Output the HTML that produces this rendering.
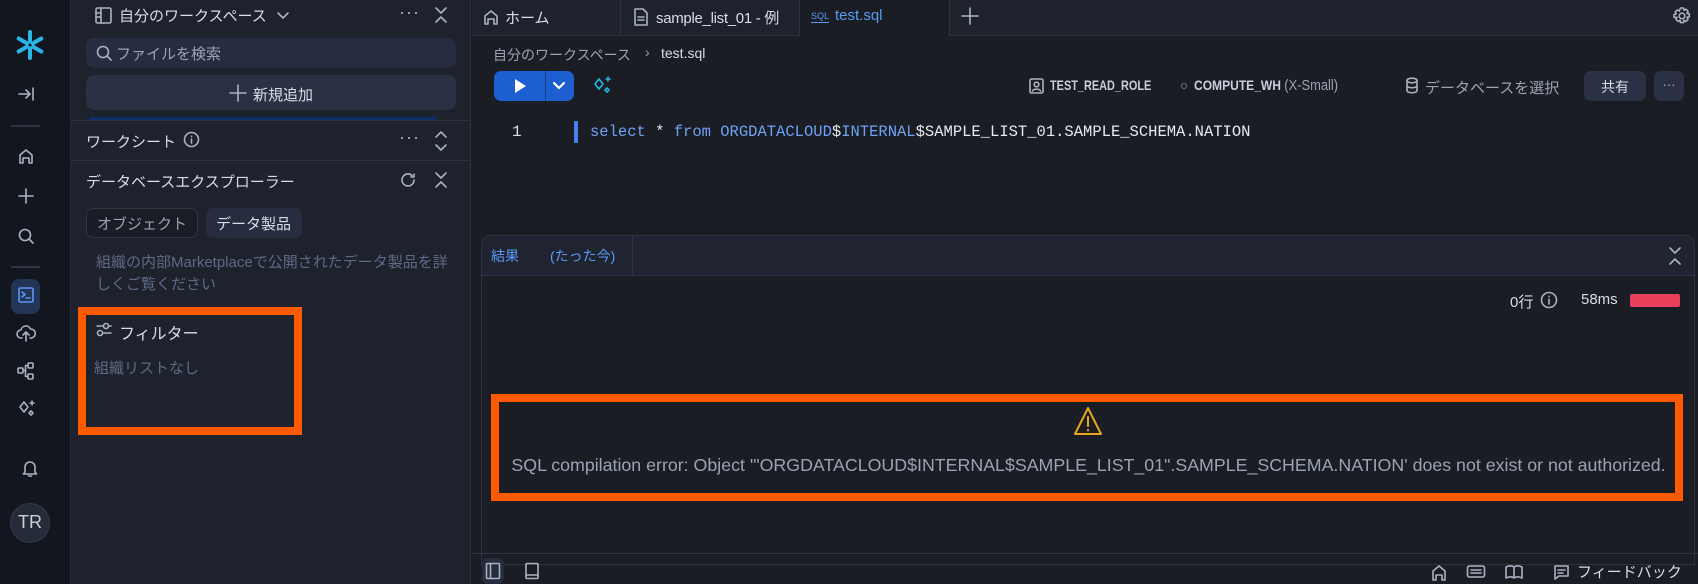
<!DOCTYPE html>
<html><head><meta charset="utf-8"><style>
*{box-sizing:border-box;margin:0;padding:0}
body{width:1698px;height:584px;overflow:hidden;background:#1a1d24;font-family:"Liberation Sans","Noto Sans CJK JP",sans-serif;color:#c9cfdb;position:relative}
.a{position:absolute}
svg{position:absolute;fill:none;stroke:#aab2c2;stroke-width:1.6;stroke-linecap:round;stroke-linejoin:round}
.t{position:absolute;white-space:nowrap}
</style></head><body>
<!-- left rail -->
<div class="a" style="left:0;top:0;width:71px;height:584px;background:#12161f;border-right:1px solid #272c38"></div>
<svg style="left:14px;top:29px" width="32" height="32" viewBox="0 0 32 32"><g stroke="#29b5e8" stroke-width="4"><path d="M16 3v9M16 20v9M4.7 9.5l7.8 4.5M19.5 18l7.8 4.5M4.7 22.5l7.8-4.5M19.5 14l7.8-4.5"/></g><circle cx="16" cy="16" r="2.5" stroke="#29b5e8" stroke-width="2"/></svg>
<svg style="left:16px;top:84px" width="20" height="20" viewBox="0 0 20 20"><path d="M3 10h11M10 6l4 4-4 4M17 4v12"/></svg>
<div class="a" style="left:11px;top:125px;width:29px;height:2px;background:#2f3542"></div>
<svg style="left:16px;top:146px" width="20" height="20" viewBox="0 0 20 20"><path d="M4 17V9l6-5 6 5v8h-3v-5H7v5z"/></svg>
<svg style="left:16px;top:186px" width="20" height="20" viewBox="0 0 20 20"><path d="M10 3v14M3 10h14"/></svg>
<svg style="left:16px;top:226px" width="20" height="20" viewBox="0 0 20 20"><circle cx="9" cy="9" r="5.5"/><path d="M13 13l4 4"/></svg>
<div class="a" style="left:11px;top:266px;width:29px;height:2px;background:#2f3542"></div>
<div class="a" style="left:11px;top:279px;width:29px;height:35px;border-radius:8px;background:#233556"></div>
<svg style="left:18px;top:287px" width="16" height="16" viewBox="0 0 16 16"><rect x="1" y="1" width="14" height="14" rx="1.5" stroke="#5a9af5"/><path d="M4 5l3 2.5L4 10M8 11h4" stroke="#5a9af5"/></svg>
<svg style="left:16px;top:323px" width="20" height="20" viewBox="0 0 20 20"><path d="M6 15H5a4 4 0 0 1 0-8 5 5 0 0 1 9.5-1A4 4 0 0 1 15 15h-1M10 18v-8M7 12l3-3 3 3"/></svg>
<svg style="left:16px;top:361px" width="20" height="20" viewBox="0 0 20 20"><rect x="2" y="7" width="5" height="5" rx="1"/><rect x="12" y="2" width="5" height="5" rx="1"/><rect x="12" y="13" width="5" height="5" rx="1"/><path d="M7 9.5h2.5M9.5 4.5v11h2.5M9.5 4.5h2.5"/></svg>
<svg style="left:16px;top:398px" width="20" height="20" viewBox="0 0 20 20"><path d="M8 4l4 5-4 5-4-5zM15 13l2 2-2 2-2-2zM16 3v4M14 5h4"/></svg>
<svg style="left:20px;top:458px" width="20" height="20" viewBox="0 0 20 20"><path d="M5 14V9a5 5 0 0 1 10 0v5l1.5 2h-13zM8.5 18h3"/></svg>
<div class="a" style="left:10px;top:503px;width:40px;height:40px;border-radius:50%;background:#252b38;border:1px solid #333a48"></div>
<div class="t" style="left:10px;top:512px;width:40px;text-align:center;font-size:18px;color:#c9cfdb">TR</div>
<!-- side panel -->
<div class="a" style="left:71px;top:0;width:400px;height:584px;background:#1e222d;border-right:1px solid #2d3340"></div>
<svg style="left:95px;top:7px" width="17" height="17" viewBox="0 0 17 17"><rect x="1" y="1" width="15" height="15" rx="1.5"/><path d="M6 1v15M1 6h5M1 10h5"/></svg>
<div class="t" style="left:119px;top:5px;font-size:15px;color:#d8dde6">自分のワークスペース</div>
<svg style="left:275px;top:8px" width="16" height="14" viewBox="0 0 16 14"><path d="M3 5l5 5 5-5"/></svg>
<div class="t" style="left:399px;top:2px;font-size:18px;color:#aab2c2;letter-spacing:1px">···</div>
<svg style="left:433px;top:6px" width="16" height="18" viewBox="0 0 16 18"><path d="M3 2l5 5 5-5M3 16l5-5 5 5"/></svg>
<div class="a" style="left:86px;top:38px;width:370px;height:30px;border-radius:8px;background:#272d40"></div>
<svg style="left:95px;top:44px" width="18" height="18" viewBox="0 0 18 18"><circle cx="8" cy="8" r="5.5"/><path d="M12 12l4 4"/></svg>
<div class="t" style="left:116px;top:43px;font-size:15px;color:#9aa3b4">ファイルを検索</div>
<div class="a" style="left:86px;top:75px;width:370px;height:35px;border-radius:8px;background:#2a3145"></div>
<svg style="left:228px;top:83px" width="20" height="20" viewBox="0 0 20 20"><path d="M10 2v16M2 10h16"/></svg>
<div class="t" style="left:253px;top:84px;font-size:15px;color:#d8dde6">新規追加</div>
<div class="a" style="left:89px;top:117px;width:348px;height:3px;background:#0b2f66;border-radius:2px"></div>
<div class="a" style="left:71px;top:120px;width:400px;height:1px;background:#2d3340"></div>
<div class="t" style="left:86px;top:131px;font-size:15px;color:#d8dde6">ワークシート</div>
<svg style="left:183px;top:131px" width="17" height="17" viewBox="0 0 17 17"><circle cx="8.5" cy="8.5" r="7"/><path d="M8.5 8v4M8.5 5.3v.2"/></svg>
<div class="t" style="left:399px;top:127px;font-size:18px;color:#aab2c2;letter-spacing:1px">···</div>
<svg style="left:433px;top:130px" width="16" height="22" viewBox="0 0 16 22"><path d="M3 7l5-5 5 5M3 15l5 5 5-5"/></svg>
<div class="a" style="left:71px;top:160px;width:400px;height:1px;background:#2d3340"></div>
<div class="t" style="left:86px;top:171px;font-size:15px;color:#d8dde6">データベースエクスプローラー</div>
<svg style="left:399px;top:171px" width="18" height="18" viewBox="0 0 18 18"><path d="M15 9a6 6 0 1 1-2-4.5M15 3v3h-3"/></svg>
<svg style="left:433px;top:171px" width="16" height="18" viewBox="0 0 16 18"><path d="M3 2l5 5 5-5M3 16l5-5 5 5"/></svg>
<div class="a" style="left:86px;top:208px;width:112px;height:30px;border-radius:7px;border:1px solid #2f3544;background:#1a1d26"></div>
<div class="t" style="left:97px;top:213px;font-size:15px;color:#9aa3b4">オブジェクト</div>
<div class="a" style="left:206px;top:208px;width:96px;height:30px;border-radius:7px;background:#272d40"></div>
<div class="t" style="left:216px;top:213px;font-size:15px;color:#d8dde6">データ製品</div>
<div class="t" style="left:96px;top:252px;font-size:15px;color:#5d6a85;line-height:22px;white-space:normal;width:365px">組織の内部Marketplaceで公開されたデータ製品を詳しくご覧ください</div>
<div class="a" style="left:78px;top:307px;width:224px;height:128px;border:8px solid #ff5a00"></div>
<svg style="left:95px;top:321px" width="18" height="18" viewBox="0 0 18 18"><circle cx="11" cy="5" r="2.5"/><circle cx="5" cy="12" r="2.5"/><path d="M2 5h6.5M13.5 5H16M8 12h8"/></svg>
<div class="t" style="left:119px;top:320px;font-size:16px;color:#d8dde6">フィルター</div>
<div class="t" style="left:94px;top:357px;font-size:15px;color:#5d6a85">組織リストなし</div>
<!-- tab bar -->
<div class="a" style="left:472px;top:0;width:1226px;height:36px;background:#1e222d;border-bottom:1px solid #2d3340"></div>
<div class="a" style="left:620px;top:0;width:1px;height:35px;background:#2d3340"></div>
<div class="a" style="left:799px;top:0;width:1px;height:35px;background:#2d3340"></div>
<div class="a" style="left:800px;top:0;width:149px;height:36px;background:#1a1d24"></div>
<div class="a" style="left:949px;top:0;width:1px;height:35px;background:#2d3340"></div>
<svg style="left:482px;top:8px" width="18" height="18" viewBox="0 0 18 18"><path d="M3 16V8l6-5 6 5v8h-3v-5H6v5z"/></svg>
<div class="t" style="left:505px;top:7px;font-size:15px;color:#d8dde6">ホーム</div>
<svg style="left:633px;top:7px" width="16" height="20" viewBox="0 0 16 20"><path d="M2 2h8l4 4v12H2zM5 10h6M5 13h6"/></svg>
<div class="t" style="left:656px;top:7px;font-size:15px;color:#d8dde6;letter-spacing:-0.3px">sample_list_01 - 例</div>
<div class="t" style="left:811px;top:11px;font-size:9px;color:#5a9af5;border-bottom:1px solid #5a9af5;line-height:11px">SQL</div>
<div class="t" style="left:835px;top:7px;font-size:15px;color:#5a9af5">test.sql</div>
<svg style="left:960px;top:6px" width="20" height="20" viewBox="0 0 20 20"><path d="M10 2v16M2 10h16"/></svg>
<svg style="left:1672px;top:6px" width="20" height="20" viewBox="0 0 20 20"><circle cx="10" cy="10" r="2.8"/><path d="M8.5 2h3l.5 2.3 2-1.1 2.1 2.1-1.1 2 2.3.5v3l-2.3.5 1.1 2-2.1 2.1-2-1.1-.5 2.3h-3l-.5-2.3-2 1.1-2.1-2.1 1.1-2L2 11.5v-3l2.3-.5-1.1-2 2.1-2.1 2 1.1z"/></svg>
<!-- toolbar -->
<div class="t" style="left:493px;top:45px;font-size:14px;color:#9aa3b4">自分のワークスペース</div>
<div class="t" style="left:645px;top:44px;font-size:14px;color:#9aa3b4">›</div>
<div class="t" style="left:661px;top:45px;font-size:14px;color:#d8dde6">test.sql</div>
<div class="a" style="left:494px;top:71px;width:80px;height:30px;border-radius:7px;background:#1d5fd0"></div>
<div class="a" style="left:545px;top:71px;width:1px;height:30px;background:#123d8a"></div>
<svg style="left:512px;top:78px;stroke:none;fill:#fff" width="16" height="16" viewBox="0 0 16 16"><path d="M3 1l11 7-11 7z"/></svg>
<svg style="left:551px;top:78px;stroke:#fff;stroke-width:2.2" width="16" height="16" viewBox="0 0 16 16"><path d="M3 5l5 5 5-5"/></svg>
<svg style="left:593px;top:75px;stroke:#29b5e8" width="20" height="20" viewBox="0 0 20 20"><path d="M6 4l4 5-4 5-4-5zM14 13l2 2-2 2-2-2zM15 2v4M13 4h4"/></svg>
<svg style="left:1029px;top:78px" width="15" height="16" viewBox="0 0 15 16"><rect x="1" y="1" width="13" height="14" rx="1.5"/><circle cx="7.5" cy="6.5" r="2.3"/><path d="M3.5 13c1-2.5 7-2.5 8 0"/></svg>
<div class="t" style="left:1050px;top:77px;font-size:14px;font-weight:bold;color:#c9cfdb;transform:scaleX(0.78);transform-origin:left">TEST_READ_ROLE</div>
<div class="a" style="left:1181px;top:83px;width:6px;height:6px;border-radius:50%;border:1px solid #6b7487"></div>
<div class="t" style="left:1194px;top:77px;font-size:14px;font-weight:bold;color:#c9cfdb;transform:scaleX(0.86);transform-origin:left">COMPUTE_WH <span style="font-weight:normal;color:#9aa3b4;font-size:15px">(X-Small)</span></div>
<svg style="left:1405px;top:77px" width="14" height="17" viewBox="0 0 14 17"><ellipse cx="7" cy="3.5" rx="5" ry="2.3"/><path d="M2 3.5v10c0 3 10 3 10 0v-10M2 8.5c0 3 10 3 10 0"/></svg>
<div class="t" style="left:1425px;top:77px;font-size:15px;color:#9aa3b4">データベースを選択</div>
<div class="a" style="left:1584px;top:71px;width:62px;height:30px;border-radius:7px;background:#2a3145"></div>
<div class="t" style="left:1584px;top:77px;width:62px;text-align:center;font-size:14px;color:#d8dde6">共有</div>
<div class="a" style="left:1654px;top:71px;width:30px;height:30px;border-radius:7px;background:#2a3145"></div>
<div class="t" style="left:1654px;top:77px;width:30px;text-align:center;font-size:13px;color:#aab2c2">···</div>
<!-- code -->
<div class="t" style="left:512px;top:123px;font-family:'Liberation Mono',monospace;font-size:16px;color:#d8dde6">1</div>
<div class="a" style="left:574px;top:121px;width:4px;height:22px;background:#4a7ff0"></div>
<div class="t" style="left:590px;top:123px;font-family:'Liberation Mono',monospace;font-size:15.5px;color:#e6e9ef"><span style="color:#6ea2f5">select</span> * <span style="color:#6ea2f5">from</span> <span style="color:#6ea2f5">ORGDATACLOUD</span>$<span style="color:#6ea2f5">INTERNAL</span>$SAMPLE_LIST_01.SAMPLE_SCHEMA.NATION</div>
<!-- results -->
<div class="a" style="left:481px;top:235px;width:1214px;height:330px;border:1px solid #2d3340;border-radius:10px 10px 0 0;background:#1a1d24"></div>
<div class="a" style="left:482px;top:236px;width:1212px;height:40px;background:#1f2430;border-bottom:1px solid #2d3340;border-radius:10px 10px 0 0"></div>
<div class="a" style="left:632px;top:236px;width:1px;height:40px;background:#2d3340"></div>
<div class="t" style="left:491px;top:246px;font-size:14px;color:#5a9af5">結果</div>
<div class="t" style="left:550px;top:246px;font-size:14px;color:#5a9af5">(たった今)</div>
<svg style="left:1667px;top:246px" width="16" height="20" viewBox="0 0 16 20"><path d="M3 2l5 5 5-5M3 18l5-5 5 5"/></svg>
<div class="t" style="left:1510px;top:291px;font-size:15px;color:#d8dde6">0行</div>
<svg style="left:1540px;top:291px" width="18" height="18" viewBox="0 0 18 18"><circle cx="9" cy="9" r="7.5"/><path d="M9 8v5M9 5.3v.2"/></svg>
<div class="t" style="left:1581px;top:291px;font-size:15px;color:#d8dde6">58ms</div>
<div class="a" style="left:1630px;top:294px;width:50px;height:13px;border-radius:2px;background:#e8405a"></div>
<div class="a" style="left:491px;top:394px;width:1192px;height:107px;border:8px solid #ff5a00"></div>
<svg style="left:1072px;top:405px;stroke:#e8a317;stroke-width:2" width="32" height="34" viewBox="0 0 32 34"><path d="M16 3L3 29h26z"/><path d="M16 12v9M16 25v.5"/></svg>
<div class="t" style="left:500px;top:455px;width:1177px;text-align:center;font-size:17.8px;color:#9aa3b4">SQL compilation error: Object '"ORGDATACLOUD$INTERNAL$SAMPLE_LIST_01".SAMPLE_SCHEMA.NATION' does not exist or not authorized.</div>
<!-- bottom bar -->
<div class="a" style="left:472px;top:553px;width:1226px;height:1px;background:#2d3340"></div>
<div class="a" style="left:482px;top:558px;width:22px;height:26px;border-radius:6px;background:#272d40"></div>
<svg style="left:485px;top:562px" width="16" height="18" viewBox="0 0 16 18"><rect x="1.5" y="1.5" width="13" height="15" rx="1"/><path d="M5.5 1.5v15"/></svg>
<svg style="left:524px;top:562px" width="16" height="18" viewBox="0 0 16 18"><rect x="2" y="1.5" width="12" height="15" rx="1"/><path d="M2 13h12"/></svg>
<svg style="left:1430px;top:563px" width="18" height="18" viewBox="0 0 18 18"><path d="M3 17V8l6-5 6 5v9h-3v-5H6v5z"/></svg>
<svg style="left:1466px;top:564px" width="20" height="16" viewBox="0 0 20 16"><rect x="1.5" y="2" width="17" height="11" rx="2"/><path d="M5 6h10M5 9h10"/></svg>
<svg style="left:1504px;top:564px" width="20" height="16" viewBox="0 0 20 16"><path d="M10 3c-2-1.5-5-1.5-8 0v11c3-1.5 6-1.5 8 0 2-1.5 5-1.5 8 0V3c-3-1.5-6-1.5-8 0zM10 3v11"/></svg>
<svg style="left:1553px;top:564px" width="17" height="17" viewBox="0 0 17 17"><path d="M2 2h13v10H6l-4 3zM5 6h7M5 9h5"/></svg>
<div class="t" style="left:1577px;top:561px;font-size:15px;color:#d8dde6">フィードバック</div>
</body></html>
